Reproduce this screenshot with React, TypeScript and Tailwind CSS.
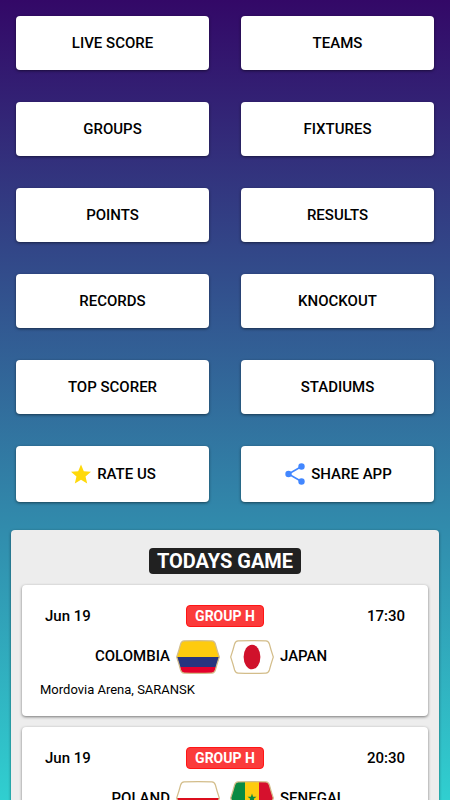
import { useId } from 'react';
import type { ReactNode } from 'react';

type Team = 'COLOMBIA' | 'JAPAN' | 'POLAND' | 'SENEGAL';

interface Game {
  date: string;
  time: string;
  group: string;
  home: Team;
  away: Team;
  venue: string;
}

const menu = [
  'LIVE SCORE',
  'TEAMS',
  'GROUPS',
  'FIXTURES',
  'POINTS',
  'RESULTS',
  'RECORDS',
  'KNOCKOUT',
  'TOP SCORER',
  'STADIUMS',
];

const games: Game[] = [
  {
    date: 'Jun 19',
    time: '17:30',
    group: 'GROUP H',
    home: 'COLOMBIA',
    away: 'JAPAN',
    venue: 'Mordovia Arena, SARANSK',
  },
  {
    date: 'Jun 19',
    time: '20:30',
    group: 'GROUP H',
    home: 'POLAND',
    away: 'SENEGAL',
    venue: 'Spartak Stadium, MOSCOW',
  },
];

const flags: Record<Team, ReactNode> = {
  COLOMBIA: (
    <>
      <rect width="44" height="17" fill="#fecb0f" />
      <rect y="17" width="44" height="10" fill="#27347f" />
      <rect y="27" width="44" height="7" fill="#e4002b" />
    </>
  ),
  JAPAN: (
    <>
      <rect width="44" height="34" fill="#fff" />
      <ellipse cx="22" cy="17" rx="8.4" ry="12.3" fill="#d0112b" />
    </>
  ),
  POLAND: (
    <>
      <rect width="44" height="17" fill="#fff" />
      <rect y="17" width="44" height="17" fill="#dc0f1e" />
    </>
  ),
  SENEGAL: (
    <>
      <rect width="15" height="34" fill="#0a8a43" />
      <rect x="15" width="14" height="34" fill="#fecb0f" />
      <rect x="29" width="15" height="34" fill="#d6112d" />
      <path
        d="M22 12.5l1.1 3.3h3.4l-2.7 2 1 3.3-2.8-2-2.8 2 1-3.3-2.7-2h3.4z"
        fill="#0a8a43"
      />
    </>
  ),
};

const flagShape =
  'M8 .9Q22 .5 36 .9Q38.400 1 39.400 4Q40.800 9.500 43.300 17Q40.800 24.500 39.400 30Q38.400 33 36 33.100Q22 33.500 8 33.100Q5.600 33 4.600 30Q3.200 24.500 .7 17Q3.200 9.500 4.600 4Q5.600 1 8 .9Z';

const Flag = ({ team }: { team: Team }) => {
  const clip = useId();

  return (
    <svg viewBox="0 0 44 34" className="h-[34px] w-11 shrink-0" aria-hidden="true">
      <clipPath id={clip}>
        <path d={flagShape} />
      </clipPath>
      <g clipPath={`url(#${clip})`}>{flags[team]}</g>
      <path d={flagShape} fill="none" stroke="#d3bd8a" strokeWidth="1.2" />
    </svg>
  );
};

const MenuButton = ({ children }: { children: ReactNode }) => (
  <button
    type="button"
    className="flex min-h-[54px] items-center justify-center rounded bg-white text-[15px] font-medium text-black shadow-[0_1px_3px_rgba(0,0,0,0.5)]"
  >
    {children}
  </button>
);

const GameCard = ({ game }: { game: Game }) => (
  <article className="rounded bg-white px-[18px] pt-5 pb-4 shadow-[0_1px_3px_rgba(0,0,0,0.5)]">
    <div className="grid grid-cols-3 items-center px-[5px] text-[15px] font-medium">
      <span>{game.date}</span>
      <span className="justify-self-center rounded border border-[#ff1515] bg-[#fb3b3b] px-2 text-sm leading-5 font-bold text-white">
        {game.group}
      </span>
      <span className="justify-self-end">{game.time}</span>
    </div>
    <div className="mt-3 grid grid-cols-2 gap-2.5 text-[15px] font-medium">
      <div className="flex items-center justify-end gap-1.5">
        <span>{game.home}</span>
        <Flag team={game.home} />
      </div>
      <div className="flex items-center gap-1.5">
        <Flag team={game.away} />
        <span>{game.away}</span>
      </div>
    </div>
    <p className="mt-1.5 text-[13px] leading-5">{game.venue}</p>
  </article>
);

export default function App() {
  return (
    <main className="min-h-screen bg-[linear-gradient(to_bottom,#330867,#30cfd0)] bg-fixed py-4 font-[Roboto,sans-serif] text-black">
      <nav className="grid grid-cols-2 gap-8 px-4">
        {menu.map((label) => (
          <MenuButton key={label}>{label}</MenuButton>
        ))}
        <MenuButton>
          <span className="flex items-center gap-1 py-4">
            <svg viewBox="0 0 24 24" className="size-6" fill="#ffd90a" aria-hidden="true">
              <path d="M12 17.770L18.180 21.500L16.540 14.470L22 9.740L14.810 9.130L12 2.500L9.190 9.130L2 9.740L7.460 14.470L5.820 21.500Z" />
            </svg>
            RATE US
          </span>
        </MenuButton>
        <MenuButton>
          <span className="flex items-center gap-1 py-4">
            <svg viewBox="0 0 24 24" className="size-6" aria-hidden="true">
              <path d="M18.500 4.500L5.500 12L18.500 19.500" fill="none" stroke="#4287ff" strokeWidth="1.600" />
              <circle cx="18.500" cy="4.500" r="3.200" fill="#4287ff" />
              <circle cx="5.500" cy="12" r="3.200" fill="#4287ff" />
              <circle cx="18.500" cy="19.500" r="3.200" fill="#4287ff" />
            </svg>
            SHARE APP
          </span>
        </MenuButton>
      </nav>

      <section className="mx-[11px] mt-7 rounded bg-[#ededed] px-[11px] pt-[18px] pb-4 shadow-[0_1px_3px_rgba(0,0,0,0.5)]">
        <h2 className="mx-auto w-fit rounded bg-[#212121] px-2 text-xl leading-[26px] font-bold text-white">
          TODAYS GAME
        </h2>
        <div className="mt-[11px] flex flex-col gap-[11px]">
          {games.map((game) => (
            <GameCard key={game.home} game={game} />
          ))}
        </div>
      </section>
    </main>
  );
}
